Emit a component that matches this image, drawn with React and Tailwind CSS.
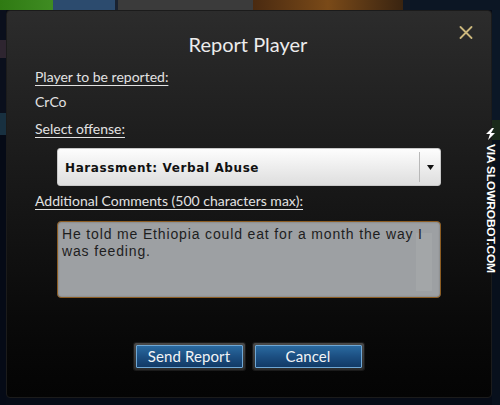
import React from "react";

function CloseIcon() {
  return (
    <svg width="14" height="13" viewBox="0 0 14 13" className="block">
      <path d="M1.5 1 L12.5 12 M12.5 1 L1.5 12" stroke="#cbb77c" strokeWidth="1.8" strokeLinecap="round" />
    </svg>
  );
}

function Bolt() {
  return (
    <svg width="11" height="12" viewBox="0 0 11 12" className="block">
      <path d="M7 0 L1 6 L5 6 L3 12 L10 5 L6 5 L9 0 Z" fill="#ffffff" />
    </svg>
  );
}

function GameButton({ children }) {
  return (
    <div className="w-[111px] h-[27px] rounded-[2px] bg-gradient-to-b from-[#4a4a4a] to-[#2a2a2a] p-[2px] shadow-[0_0_0_1px_#1a1a1a]">
      <div className="h-full w-full rounded-[1px] border border-[#6fa7d4] bg-gradient-to-b from-[#2a6aa0] via-[#1c4f82] to-[#123a66] flex items-center justify-center">
        <span className="text-[15px] leading-none text-[#f2f4f6] font-['Lato',sans-serif] tracking-[0.1px]">{children}</span>
      </div>
    </div>
  );
}

export default function App() {
  return (
    <div className="relative w-[500px] h-[405px] overflow-hidden bg-[#060b16] flex flex-col font-['Lato',sans-serif]">
      {/* top background strip */}
      <div className="h-[10px] flex shrink-0">
        <div className="w-[53px] bg-gradient-to-r from-[#2f7a12] to-[#3f8c22]" />
        <div className="w-[62px] bg-[#2c4b6e]" />
        <div className="w-[3px] bg-[#1a2230]" />
        <div className="w-[135px] bg-[#3b3b3b]" />
        <div className="w-[150px] bg-gradient-to-r from-[#4a2a10] via-[#7a4a18] to-[#3a2410]" />
        <div className="w-[7px] bg-[#101825]" />
        <div className="flex-1 bg-[#0c1624]" />
      </div>
      <div className="flex flex-1">
        {/* left strip */}
        <div className="w-[6px] flex flex-col shrink-0">
          <div className="h-[30px] bg-[#0a0f1c]" />
          <div className="h-[18px] bg-[#2e2530]" />
          <div className="h-[55px] bg-[#0a0f1c]" />
          <div className="h-[22px] bg-[#183040]" />
          <div className="flex-1 bg-[#050a16]" />
        </div>
        {/* dialog */}
        <div className="w-[486px] h-[388px] rounded-[4px] border border-[#1b1b1b] bg-gradient-to-b from-[#2c2c2c] via-[#161616] to-[#040404] flex flex-col relative">
          <div className="absolute right-[18px] top-[15px]">
            <CloseIcon />
          </div>
          <div className="pt-[21px] text-center text-[20px] leading-[24px] text-[#ececec] pr-[2px]">
            Report Player
          </div>
          <div className="pl-[28px] pt-[12px] flex flex-col text-[14px] leading-[18px] text-[#e2e2e2]">
            <div className="underline underline-offset-[3px] decoration-[1px]">Player to be reported:</div>
            <div className="pt-[7px]">CrCo</div>
            <div className="pt-[9px] underline underline-offset-[3px] decoration-[1px]">Select offense:</div>
          </div>
          <div className="pl-[50px] pt-[10px]">
            <div className="w-[384px] h-[38px] rounded-[3px] border border-[#c8c8c8] bg-gradient-to-b from-[#fdfdfd] to-[#dedede] flex items-center">
              <span className="flex-1 pl-[7px] pt-[2px] font-['DejaVu_Sans',sans-serif] font-bold text-[12px] text-[#111] tracking-[0.6px]">
                Harassment: Verbal Abuse
              </span>
              <div className="w-px h-[30px] bg-[#b8b8b8]" />
              <div className="w-[20px] flex justify-center">
                <svg width="7" height="5" viewBox="0 0 7 5"><path d="M0 0 L7 0 L3.5 5 Z" fill="#111" /></svg>
              </div>
            </div>
          </div>
          <div className="pl-[28px] pt-[6px] text-[14px] leading-[18px] text-[#e2e2e2]">
            <div className="underline underline-offset-[3px] decoration-[1px]">Additional Comments (500 characters max):</div>
          </div>
          <div className="pl-[50px] pt-[11px]">
            <div className="relative w-[384px] h-[77px] rounded-[4px] border border-[#8c5c22] bg-[#9da0a3] shadow-[inset_0_0_2px_#6a6a6a] px-[4px] pt-[4px]">
              <div className="absolute right-[8px] top-[11px] w-[16px] h-[58px] bg-[#a3a6a8]" />
              <p className="relative w-[370px] font-['Liberation_Sans',sans-serif] text-[14px] leading-[17px] text-[#1e1e1e] tracking-[0.85px]">
                He told me Ethiopia could eat for a month the way I was feeding.
              </p>
            </div>
          </div>
          <div className="flex justify-center gap-[8px] pt-[45px] pr-[1px]">
            <GameButton>Send Report</GameButton>
            <GameButton>Cancel</GameButton>
          </div>
        </div>
        {/* right strip */}
        <div className="flex-1 flex flex-col">
          <div className="h-[110px] bg-[#0b1726]" />
          <div className="h-[20px] bg-[#1a2a1a]" />
          <div className="flex-1 bg-[#08101c]" />
        </div>
      </div>
      {/* watermark */}
      <div className="absolute left-[484px] top-[128px] flex flex-col items-center gap-[4px]">
        <Bolt />
        <span className="[writing-mode:vertical-rl] font-['Liberation_Sans',sans-serif] font-bold text-[12px] leading-[13px] text-white tracking-[-0.2px] scale-x-[0.9]">
          VIA SLOWROBOT.COM
        </span>
      </div>
    </div>
  );
}
